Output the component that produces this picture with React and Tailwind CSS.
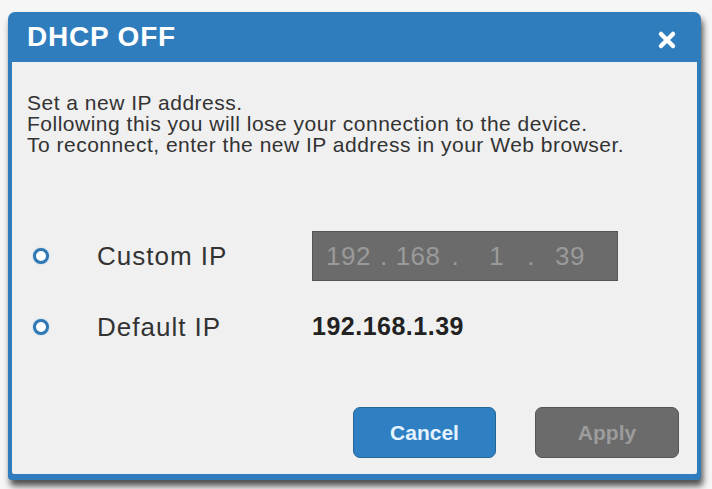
const CloseIcon = () => (
  <svg width="20" height="20" viewBox="0 0 20 20" className="mt-[5px] block">
    <path d="M4 4 L16 16 M16 4 L4 16" stroke="#ffffff" strokeWidth="4.5" strokeLinecap="round" />
  </svg>
);

const Radio = () => (
  <span className="block h-[16px] w-[16px] rounded-full border-[3px] border-[#2f78b4] bg-white shadow-[0_0_2px_#9cc8ea]" />
);

export default function App() {
  return (
    <div className="h-[489px] w-[712px] overflow-hidden bg-[#f6f6f6] pl-[8px] pt-[12px] font-['Liberation_Sans',Arial,sans-serif]">
      <div className="flex h-[468px] w-[693px] flex-col rounded-t-[7px] rounded-b-[4px] bg-[#2f7dbd] shadow-[2px_6px_6px_rgba(50,50,50,0.85)]">
        {/* Header */}
        <div className="flex h-[50px] shrink-0 items-center justify-between pl-[19px] pr-[24px]">
          <h2 className="text-[28px] font-bold leading-none tracking-[0.8px] text-white">DHCP OFF</h2>
          <CloseIcon />
        </div>

        {/* Body */}
        <div className="mx-[4px] mb-[6px] flex flex-1 flex-col rounded-b-[2px] bg-[#f0f0f0] pl-[15px] pr-[18px] pt-[30px]">
          <div className="text-[21px] leading-[21px] tracking-[0.5px] text-[#333333]">
            <p>Set a new IP address.</p>
            <p>Following this you will lose your connection to the device.</p>
            <p>To reconnect, enter the new IP address in your Web browser.</p>
          </div>

          <div className="mt-[76px] flex h-[50px] items-center">
            <div className="w-[70px] pl-[6px]">
              <Radio />
            </div>
            <span className="w-[215px] text-[26px] tracking-[1px] text-[#333333]">Custom IP</span>
            <div className="flex h-[50px] w-[306px] items-center border border-[#555555] bg-[#6b6b6b] pl-[13px] text-[26px] tracking-[0.5px] text-[#9a9a9a]">
              <span>192</span>
              <span className="ml-[9px]">.</span>
              <span className="ml-[8px]">168</span>
              <span className="ml-[11px]">.</span>
              <span className="ml-[30px]">1</span>
              <span className="ml-[23px]">.</span>
              <span className="ml-[20px]">39</span>
            </div>
          </div>

          <div className="mt-[31px] flex h-[30px] items-center">
            <div className="w-[70px] pl-[6px]">
              <Radio />
            </div>
            <span className="w-[215px] text-[26px] tracking-[1px] text-[#333333]">Default IP</span>
            <span className="text-[25px] font-bold tracking-[0.5px] text-[#222222]">192.168.1.39</span>
          </div>

          <div className="mt-[65px] flex justify-end gap-[39px]">
            <button className="h-[51px] w-[143px] rounded-[7px] border border-[#246797] bg-[#2f80c2] text-[21px] font-bold text-[#e4f3ff]">
              Cancel
            </button>
            <button className="h-[51px] w-[144px] rounded-[7px] border border-[#555555] bg-[#6b6b6b] text-[21px] font-bold text-[#9c9c9c]">
              Apply
            </button>
          </div>
        </div>
      </div>
    </div>
  );
}
